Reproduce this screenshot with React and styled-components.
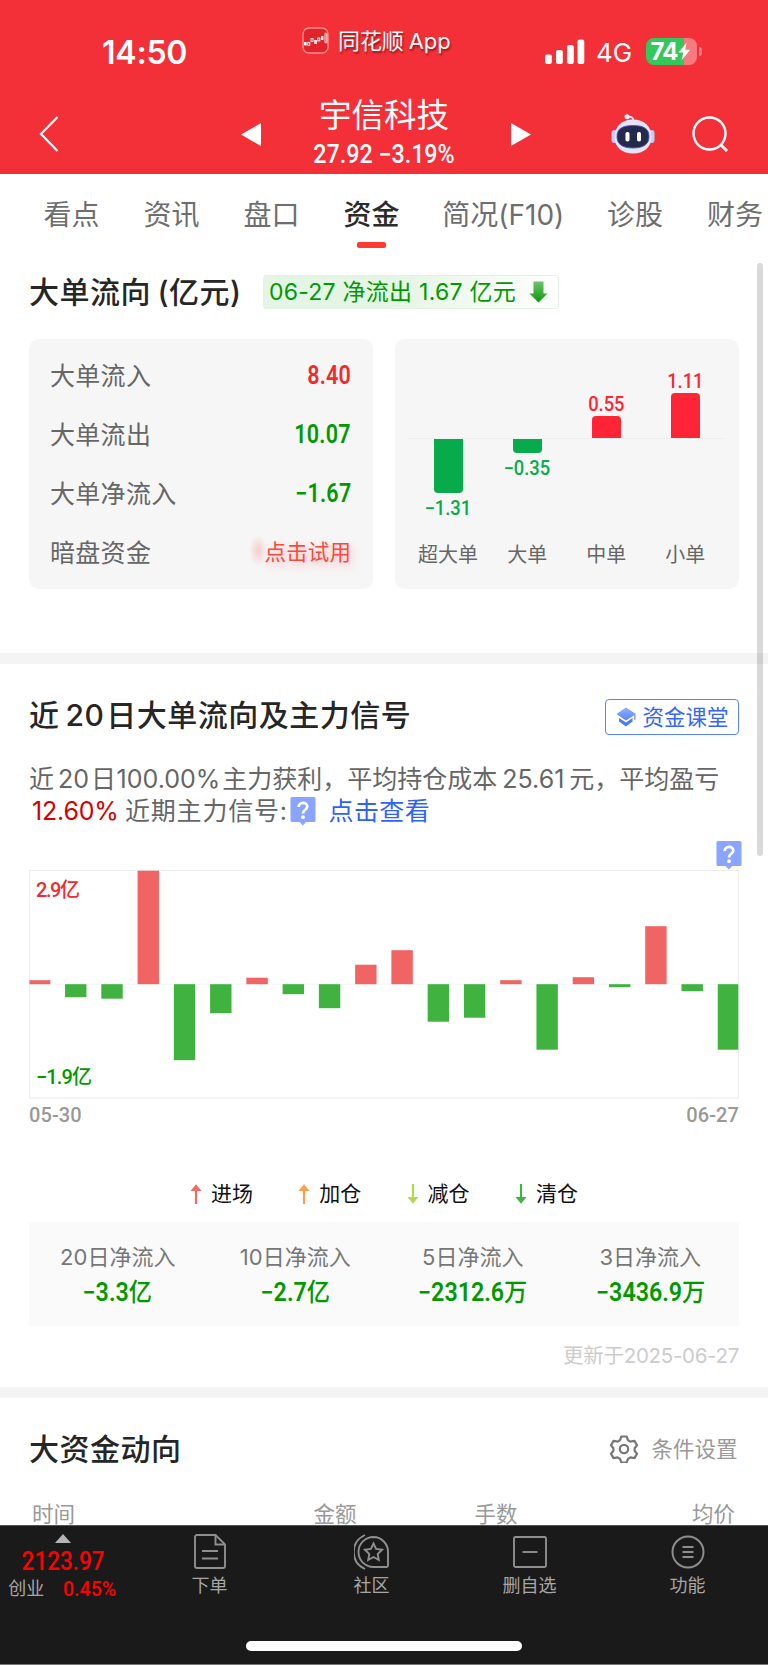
import React from 'react';
import styled, { createGlobalStyle } from 'styled-components';

const flowRows = [
    { label: '大单流入', value: '8.40', color: '#f12b2b' },
    { label: '大单流出', value: '10.07', color: '#009900' },
    { label: '大单净流入', value: '−1.67', color: '#009900' },
];

const orderBars = [
    { label: '超大单', value: '−1.31', height: -54 },
    { label: '大单', value: '−0.35', height: -14 },
    { label: '中单', value: '0.55', height: 22 },
    { label: '小单', value: '1.11', height: 45 },
];

const dailyFlow = [
    4, -13, -14.5, 113.5, -76, -29, 6.5, -10, -24, 19.5, 34, -37.5, -33.5, 4,
    -65.5, 7, -3, 58, -7, -65.5,
];

const legend = [
    { label: '进场', color: '#f26b66', up: true },
    { label: '加仓', color: '#ff9f4a', up: true },
    { label: '减仓', color: '#b2d84f' },
    { label: '清仓', color: '#43b244' },
];

const totals = [
    { label: '20日净流入', value: '−3.3', unit: '亿' },
    { label: '10日净流入', value: '−2.7', unit: '亿' },
    { label: '5日净流入', value: '−2312.6', unit: '万' },
    { label: '3日净流入', value: '−3436.9', unit: '万' },
];

const tabs = ['看点', '资讯', '盘口', '资金', '简况(F10)', '诊股', '财务'];

const AppLogo = () => (
    <svg width="27" height="27" viewBox="0 0 27 27" fill="none">
        <rect x="1" y="1" width="25" height="25" rx="6" fill="#e3232b" stroke="#fa8f90" strokeWidth="1.4" />
        <g fill="#fff">
            <rect x="2" y="15" width="2.6" height="3.4" />
            <rect x="12.3" y="13" width="2.6" height="4" />
            <rect x="19" y="9" width="2.4" height="4" />
        </g>
        <g stroke="#fff" strokeWidth="0.9">
            <rect x="5.8" y="15.4" width="2" height="3" />
            <rect x="9" y="11.6" width="2" height="3" />
            <rect x="15.8" y="11" width="2" height="3" />
            <rect x="23" y="6" width="1.8" height="10" rx="0.9" />
        </g>
    </svg>
);

const Signal = () => (
    <svg width="40" height="26" viewBox="0 0 40 26" fill="#fff">
        <rect x="0" y="15.5" width="6.8" height="9.5" rx="2" />
        <rect x="11" y="11" width="6.8" height="14" rx="2" />
        <rect x="22" y="6" width="6.8" height="19" rx="2" />
        <rect x="32.5" y="0.5" width="6.8" height="24.5" rx="2" />
    </svg>
);

const Bolt = () => (
    <svg width="13" height="19" viewBox="0 0 13 19">
        <path d="M8.6 0.4 0.6 10.6h4.7L3.6 18.6 12.2 7.8H7.2z" fill="#fff" />
    </svg>
);

const Robot = () => (
    <svg width="44" height="40" viewBox="0 0 44 40" fill="none">
        <path d="M16 2.8c4-.6 6.4.4 6.4 4.2" stroke="#e8e4f8" strokeWidth="2" />
        <circle cx="16" cy="2.8" r="2.5" fill="#f3f0ff" />
        <rect x="0.5" y="16" width="6" height="13" rx="3" fill="#c9caf3" />
        <rect x="37.5" y="16" width="6" height="13" rx="3" fill="#c9caf3" />
        <path d="M22 5.5c11 0 18.5 7 18.5 17.5S32.5 39.5 22 39.5 3.5 33.5 3.5 23 11 5.5 22 5.5z" fill="#e4e5f8" />
        <path d="M22 11.5c11 0 16 3.5 16 11s-5 11.500-16 11.500S6 30 6 22.500s5-11 16-11z" fill="#242a4c" stroke="#5550c4" strokeWidth="0.9" />
        <rect x="14.5" y="18" width="4" height="9.5" rx="1.8" fill="#fff" />
        <rect x="26" y="18" width="4" height="9.5" rx="1.8" fill="#fff" />
    </svg>
);

const Search = () => (
    <svg width="36" height="36" viewBox="0 0 36 36" fill="none" stroke="#fff" strokeWidth="2.4">
        <circle cx="17.5" cy="17.5" r="16" />
        <path d="M28.5 28.5 35 35" strokeWidth="2.8" />
    </svg>
);

const DownArrow = () => (
    <svg width="19" height="22" viewBox="0 0 19 22">
        <defs>
            <linearGradient id="down" x1="0" y1="0" x2="0" y2="1">
                <stop offset="0" stopColor="#6cc46c" />
                <stop offset="1" stopColor="#0a9a0a" />
            </linearGradient>
        </defs>
        <path d="M4.5 0.5h10v12h4L9.5 21.500 0.500 12.500h4z" fill="url(#down)" />
    </svg>
);

const Cap = () => (
    <svg width="20" height="20" viewBox="0 0 20 20">
        <defs>
            <linearGradient id="cap" x1="0" y1="0" x2="0" y2="1">
                <stop offset="0" stopColor="#8fb0ff" />
                <stop offset="1" stopColor="#5b84fb" />
            </linearGradient>
        </defs>
        <path d="M10 0.5 19.5 6.800v6h-1.200V8.200L10 13.500 0.500 7z" fill="url(#cap)" />
        <path d="M3 11 10 15.500l6.500-4.500v3.500L10 19.500 3 14.500z" fill="#4f7bfa" />
    </svg>
);

const Help = () => (
    <svg width="26" height="29" viewBox="0 0 26 29">
        <path d="M2 0h22a1.5 1.5 0 0 1 1.5 1.5v22A1.5 1.5 0 0 1 24 25h-8l-3.2 3.4L9.600 25H2A1.500 1.500 0 0 1 .5 23.500v-22A1.500 1.500 0 0 1 2 0z" fill="#8aa5ff" />
        <path d="M8.700 10c0-5.500 8.600-5.500 8.600-.400 0 3.200-4.300 3.200-4.300 6.800" fill="none" stroke="#fff" strokeWidth="2.700" />
        <circle cx="13" cy="20.200" r="1.900" fill="#fff" />
    </svg>
);

const LegendArrow = ({ color, up }) => (
    <svg width="12" height="20" viewBox="0 0 12 20">
        <g transform={up ? undefined : 'rotate(180 6 10)'}>
            <path d="M4.900 5h2.200v15H4.900z" fill={color} />
            <path d="M6 0.300 11.500 7H.5z" fill={color} />
        </g>
    </svg>
);

const Gear = () => (
    <svg width="30" height="28" viewBox="0 0 30 28" fill="none" stroke="#777" strokeWidth="2.2" strokeLinejoin="round">
        <path d="M12.400 1.500h5.200l1.500 3.800 2.300 1.300 4.100-.700 2.500 4.400-2.400 2.900v2.600l2.400 2.900-2.500 4.400-4.100-.700-2.300 1.300-1.500 3.800h-5.200l-1.500-3.800-2.300-1.300-4.100.700L2 18.700l2.400-2.900v-2.600L2 10.300l2.500-4.400 4.100.700 2.300-1.300z" />
        <circle cx="15" cy="14" r="4.2" />
    </svg>
);

const OrderIcon = () => (
    <NavSvg viewBox="0 0 36 36">
        <path d="M5 1h18.500L33 10.500V32a2 2 0 0 1-2 2H5a2 2 0 0 1-2-2V3a2 2 0 0 1 2-2z" />
        <path d="M23.500 1v9.500H33M10 17h16M10 24.500h16" />
    </NavSvg>
);

const CommunityIcon = () => (
    <NavSvg viewBox="0 0 36 36">
        <path d="M19.500 3a14.800 14.800 0 1 0 0 30h13a1.500 1.500 0 0 0 1.500-1.500V18A14.800 14.800 0 0 0 19.500 3z" />
        <path d="M11 1C-4 8-4 28 11 35" />
        <path d="m19.500 9.500 2.600 5.500 6 .8-4.400 4.200 1.100 6-5.300-3-5.300 3 1.100-6-4.400-4.200 6-.8z" />
    </NavSvg>
);

const RemoveIcon = () => (
    <NavSvg viewBox="0 0 36 36">
        <rect x="2" y="3" width="32" height="30" rx="1.5" />
        <path d="M10.500 18h15" />
    </NavSvg>
);

const MenuIcon = () => (
    <NavSvg viewBox="0 0 36 36">
        <circle cx="18" cy="18" r="15.5" />
        <path d="M12.500 13h11M12.500 18h11M12.500 23h11" />
    </NavSvg>
);

const navItems = [
    { label: '下单', Icon: OrderIcon },
    { label: '社区', Icon: CommunityIcon },
    { label: '删自选', Icon: RemoveIcon },
    { label: '功能', Icon: MenuIcon },
];

const Header = () => (
    <HeaderWrapper>
        <StatusBar>
            <Clock>14:50</Clock>
            <AppName>
                <AppLogo />
                <span>同花顺 App</span>
            </AppName>
            <Radio>
                <Signal />
                <Network>4G</Network>
                <Battery>
                    74
                    <Bolt />
                </Battery>
                <BatteryTip />
            </Radio>
        </StatusBar>
        <TitleBar>
            <svg width="20" height="36" viewBox="0 0 20 36" fill="none" stroke="#fff" strokeWidth="2.2">
                <path d="M18.500 1 2 18l16.500 17" />
            </svg>
            <Stock>
                <svg width="20" height="23" viewBox="0 0 20 23">
                    <path d="M20 0v23L0 11.500z" fill="#fff" />
                </svg>
                <StockText>
                    <StockName>宇信科技</StockName>
                    <StockPrice>27.92 −3.19%</StockPrice>
                </StockText>
                <svg width="20" height="23" viewBox="0 0 20 23">
                    <path d="M0 0v23l20-11.500z" fill="#fff" />
                </svg>
            </Stock>
            <Actions>
                <Robot />
                <Search />
            </Actions>
        </TitleBar>
    </HeaderWrapper>
);

const LargeOrders = () => (
    <FlowSection>
        <FlowHeading>
            <Heading $space={-2}>大单流向 (亿元)</Heading>
            <FlowBadge>
                <span>06-27 净流出 1.67 亿元</span>
                <DownArrow />
            </FlowBadge>
        </FlowHeading>
        <Cards>
            <FlowCard>
                {flowRows.map(({ label, value, color }) => (
                    <FlowRow key={label}>
                        <span>{label}</span>
                        <FlowValue $color={color}>{value}</FlowValue>
                    </FlowRow>
                ))}
                <FlowRow>
                    <span>暗盘资金</span>
                    <Trial>点击试用</Trial>
                </FlowRow>
            </FlowCard>
            <OrderCard>
                <OrderPlot>
                    {orderBars.map(({ label, value, height }) => (
                        <OrderColumn key={label}>
                            <PositiveHalf>
                                {height > 0 && (
                                    <>
                                        <OrderValue $up>{value}</OrderValue>
                                        <OrderBar $up style={{ height }} />
                                    </>
                                )}
                            </PositiveHalf>
                            <NegativeHalf>
                                {height < 0 && (
                                    <>
                                        <OrderBar style={{ height: -height }} />
                                        <OrderValue>{value}</OrderValue>
                                    </>
                                )}
                            </NegativeHalf>
                            <OrderLabel>{label}</OrderLabel>
                        </OrderColumn>
                    ))}
                </OrderPlot>
            </OrderCard>
        </Cards>
    </FlowSection>
);

const MainSignal = () => (
    <SignalSection>
        <SectionTop>
            <Heading>
                近<Gap $w={6} />20<Gap $w={2} />日大单流向及主力信号
            </Heading>
            <ClassButton>
                <Cap />
                资金课堂
            </ClassButton>
        </SectionTop>
        <Summary>
            <SummaryLine>
                近<Gap $w={4} />20<Gap $w={2} />日<Gap $w={0.5} />100.00%
                <Gap $w={2} />主力获利，平均持仓成本<Gap $w={5} />25.61<Gap $w={5} />元，平均盈亏
            </SummaryLine>
            <SummaryLine>
                <Profit>12.60%</Profit>
                <Recent>近期主力信号:</Recent>
                <Help />
                <Link>点击查看</Link>
            </SummaryLine>
        </Summary>
        <HelpRow>
            <Help />
        </HelpRow>
        <Chart viewBox="0 0 710 229">
            <rect x="0.5" y="0.5" width="709" height="227.5" fill="none" stroke="#ededed" strokeWidth="1.2" />
            <path d="M0 114.200h710" stroke="#f3f3f3" />
            {dailyFlow.map((v, i) => (
                <rect
                    key={i}
                    x={Math.max(0.5, i * 36.26 - 0.2)}
                    y={v > 0 ? 114.2 - v : 114.2}
                    width={i === 0 ? 20.8 : Math.min(21.4, 709.5 - i * 36.26)}
                    height={Math.abs(v)}
                    fill={v > 0 ? '#f06464' : '#40b240'}
                />
            ))}
            <ChartText x="7" y="26.5" fill="#f12b2b" textLength="44">2.9亿</ChartText>
            <ChartText x="7" y="214" fill="#009900" textLength="56">−1.9亿</ChartText>
        </Chart>
        <Dates>
            <span>05-30</span>
            <span>06-27</span>
        </Dates>
        <Legend>
            {legend.map(({ label, color, up }) => (
                <LegendItem key={label}>
                    <LegendArrow color={color} up={up} />
                    {label}
                </LegendItem>
            ))}
        </Legend>
        <Totals>
            {totals.map(({ label, value, unit }) => (
                <Total key={label}>
                    <span>{label}</span>
                    <TotalValue>
                        <b>{value}</b>
                        {unit}
                    </TotalValue>
                </Total>
            ))}
        </Totals>
        <Updated>更新于2025-06-27</Updated>
    </SignalSection>
);

const FundMoves = () => (
    <MovesSection>
        <SectionTop>
            <Heading>大资金动向</Heading>
            <Settings>
                <Gear />
                条件设置
            </Settings>
        </SectionTop>
        <TableHead>
            <span>时间</span>
            <span>金额</span>
            <span>手数</span>
            <span>均价</span>
        </TableHead>
    </MovesSection>
);

const BottomNav = () => (
    <NavWrapper>
        <NavRow>
            <IndexBox>
                <svg width="16" height="9" viewBox="0 0 16 9">
                    <path d="M8 0l8 9H0z" fill="#b5b5b5" />
                </svg>
                <IndexValue>2123.97</IndexValue>
                <IndexChange>
                    <span>创业</span>
                    <em>0.45%</em>
                </IndexChange>
            </IndexBox>
            {navItems.map(({ label, Icon }) => (
                <NavItem key={label}>
                    <Icon />
                    <span>{label}</span>
                </NavItem>
            ))}
        </NavRow>
        <HomeBar />
    </NavWrapper>
);

const App = () => (
    <Screen>
        <GlobalStyle />
        <Header />
        <Body>
            <Tabs>
                {tabs.map((tab) => (
                    <Tab key={tab} $active={tab === '资金'}>
                        {tab}
                    </Tab>
                ))}
            </Tabs>
            <LargeOrders />
            <Divider />
            <MainSignal />
            <Divider />
            <FundMoves />
            <ScrollThumb />
        </Body>
        <BottomNav />
    </Screen>
);

export default App;

const cjk = `Inter, 'Noto Sans CJK SC', sans-serif`;
const din = `Roboto, 'Noto Sans CJK SC', sans-serif`;

const GlobalStyle = createGlobalStyle`
    * {
        box-sizing: border-box;
    }
    body {
        margin: 0;
        background: #fff;
    }
    svg {
        display: block;
        flex: none;
    }
`;

const Screen = styled.div`
    width: 768px;
    height: 1665px;
    display: flex;
    flex-direction: column;
    overflow: hidden;
    font-family: ${cjk};
    color: #666;
    white-space: nowrap;
`;

const HeaderWrapper = styled.header`
    flex: none;
    height: 174px;
    background: #f33038;
    color: #fff;
`;

const StatusBar = styled.div`
    display: flex;
    height: 84px;
`;

const Clock = styled.div`
    width: 302px;
    padding: 33px 0 0 102px;
    font-size: 32px;
    line-height: 40px;
    font-weight: 600;
    letter-spacing: -0.2px;
`;

const AppName = styled.div`
    display: flex;
    width: 243px;
    padding-top: 27px;
    font-size: 22px;
    line-height: 28px;
    letter-spacing: -0.1px;
    word-spacing: -1px;
    text-shadow: 1px 2px 2px rgba(90, 0, 0, 0.6);
    > svg {
        margin-right: 9px;
    }
`;

const Radio = styled.div`
    display: flex;
    align-items: center;
    height: 27px;
    margin-top: 38px;
`;

const Network = styled.span`
    width: 49.5px;
    margin-left: 11px;
    font-size: 26px;
    line-height: 30px;
    padding-top: 2px;
`;

const Battery = styled.div`
    display: flex;
    align-items: center;
    width: 51px;
    height: 27px;
    padding-left: 5px;
    border-radius: 8px;
    background: linear-gradient(to right, #34c759 38px, #f8797e 38px);
    font-size: 24px;
    font-weight: 700;
    letter-spacing: -0.8px;
`;

const BatteryTip = styled.div`
    width: 3px;
    height: 9px;
    margin-left: 2px;
    border-radius: 0 3px 3px 0;
    background: #f8797e;
`;

const TitleBar = styled.div`
    display: flex;
    align-items: center;
    height: 90px;
    padding: 10px 40px 0 39px;
`;

const Stock = styled.div`
    display: flex;
    align-items: center;
    margin-left: 181.5px;
`;

const StockText = styled.div`
    width: 250px;
    text-align: center;
    margin-top: 1px;
`;

const StockName = styled.div`
    font-size: 32.5px;
    line-height: 40px;
    margin-left: -3px;
`;

const StockPrice = styled.div`
    font-family: ${din};
    font-size: 25px;
    font-weight: 500;
    line-height: 38px;
    transform: scaleX(0.93);
    margin: 0 0 0 -4px;
`;

const Actions = styled.div`
    display: flex;
    align-items: center;
    gap: 37px;
    margin-left: auto;
`;

const Body = styled.main`
    position: relative;
    display: flex;
    flex-direction: column;
    height: 1351px;
    overflow: hidden;
`;

const Tabs = styled.nav`
    display: flex;
    flex: none;
    gap: 44px;
    height: 84px;
    padding: 21px 0 0 43.5px;
`;

const Tab = styled.div`
    display: flex;
    flex: none;
    flex-direction: column;
    align-items: center;
    font-size: 28px;
    line-height: 40px;
    color: ${({ $active }) => ($active ? '#2b2b2b' : '#6e6e6e')};
    font-weight: ${({ $active }) => ($active ? 500 : 400)};
    &::after {
        content: '';
        display: ${({ $active }) => ($active ? 'block' : 'none')};
        width: 29px;
        height: 6px;
        margin-top: 7px;
        border-radius: 2px;
        background: #ff3b32;
    }
    &:nth-child(5) {
        width: 119.5px;
    }
`;

const Heading = styled.h2`
    display: flex;
    white-space: pre;
    margin: 0;
    font-size: 30px;
    line-height: 40px;
    font-weight: 500;
    color: #262626;
    letter-spacing: 0.5px;
    word-spacing: ${({ $space = 0 }) => $space}px;
`;

const FlowSection = styled.section`
    flex: none;
    height: 395px;
    padding: 14px 29px 0;
`;

const FlowHeading = styled.div`
    display: flex;
    align-items: center;
    height: 40px;
`;

const FlowBadge = styled.div`
    display: flex;
    align-items: center;
    gap: 13px;
    width: 296px;
    height: 34px;
    margin-left: auto;
    margin-right: 180px;
    padding-left: 5px;
    border: 1px solid #e3f4e3;
    border-radius: 3px;
    background: linear-gradient(100deg, #e5f5e5 45%, #fff 100%);
    color: #009900;
    font-size: 23px;
    line-height: 30px;
    letter-spacing: 0.25px;
`;

const Cards = styled.div`
    display: flex;
    gap: 22px;
    margin-top: 27px;
`;

const Card = styled.div`
    width: 344px;
    height: 250px;
    border-radius: 10px;
    background: #f6f6f6;
`;

const FlowCard = styled(Card)`
    display: flex;
    flex-direction: column;
    padding: 5px 22px 0 21px;
`;

const FlowRow = styled.div`
    display: flex;
    align-items: center;
    justify-content: space-between;
    height: 59px;
    font-size: 25px;
    letter-spacing: 0.3px;
`;

const FlowValue = styled.span`
    padding-top: 3px;
    font-family: ${din};
    font-size: 25px;
    font-weight: 600;
    color: ${({ $color }) => $color};
    transform: scaleX(0.86);
    transform-origin: right;
`;

const Trial = styled.span`
    padding-left: 15px;
    background: radial-gradient(ellipse 9px 16px at 8px 50%, rgba(255, 80, 70, 0.25), transparent);
    color: #fb4840;
    font-size: 21.5px;
    text-shadow: 2px 4px 10px rgba(255, 80, 70, 0.4);
    letter-spacing: 0.1px;
`;

const OrderCard = styled(Card)`
    padding: 0 21px;
`;

const OrderPlot = styled.div`
    display: flex;
    margin: 0 -7.5px;
`;

const OrderColumn = styled.div`
    display: flex;
    flex: none;
    flex-direction: column;
    width: 79.1px;
`;

const PositiveHalf = styled.div`
    display: flex;
    flex-direction: column;
    align-items: center;
    justify-content: flex-end;
    height: 99.5px;
    border-bottom: 1px solid #eee;
`;

const NegativeHalf = styled.div`
    display: flex;
    flex-direction: column;
    align-items: center;
    height: 103px;
`;

const OrderBar = styled.div`
    width: 29px;
    flex: none;
    border-radius: ${({ $up }) => ($up ? '4px 4px 0 0' : '0 0 4px 4px')};
    background: ${({ $up }) => ($up ? '#ff2436' : '#07ab4b')};
`;

const OrderValue = styled.span`
    padding: ${({ $up }) => ($up ? 0 : '4.5px 0 0')};
    font-family: ${din};
    font-size: 19.5px;
    font-weight: 500;
    line-height: 23px;
    color: ${({ $up }) => ($up ? '#ff2436' : '#07ab4b')};
    transform: scaleX(0.94);
`;

const OrderLabel = styled.span`
    font-size: 20px;
    line-height: 26px;
    text-align: center;
`;

const Divider = styled.div`
    flex: none;
    height: 11px;
    background: #f4f4f4;
`;

const SignalSection = styled.section`
    flex: none;
    display: flex;
    flex-direction: column;
    height: 723px;
    padding: 30.5px 29px 0;
`;

const SectionTop = styled.div`
    display: flex;
    align-items: center;
    justify-content: space-between;
    height: 40px;
`;

const ClassButton = styled.div`
    display: flex;
    align-items: center;
    gap: 6.5px;
    width: 134px;
    height: 36px;
    margin-top: 5px;
    padding-left: 10px;
    border: 1.5px solid #5a82fa;
    border-radius: 4px;
    color: #3566f8;
    font-size: 21.5px;
    line-height: 30px;
`;

const Summary = styled.div`
    margin-top: 28.5px;
    font-size: 25px;
`;

const SummaryLine = styled.div`
    display: flex;
    align-items: center;
    height: 32px;
    line-height: 32px;
`;

const Gap = styled.i`
    width: ${({ $w }) => $w}px;
`;

const Profit = styled.span`
    width: 96px;
    padding-left: 3px;
    letter-spacing: -0.2px;
    color: #d40000;
`;

const Recent = styled.span`
    width: 164.5px;
    letter-spacing: 0.8px;
`;

const Link = styled.span`
    margin-left: 13px;
    letter-spacing: 0.4px;
    color: #2f62fa;
`;

const HelpRow = styled.div`
    display: flex;
    justify-content: flex-end;
    height: 29px;
    margin: 14px -2.5px 0 0;
`;

const Chart = styled.svg`
    width: 710px;
    height: 229px;
`;

const ChartText = styled.text`
    font-family: ${din};
    font-size: 20px;
    font-weight: 500;
`;

const Dates = styled.div`
    display: flex;
    justify-content: space-between;
    margin-top: 3px;
    font-family: ${din};
    font-size: 20px;
    font-weight: 500;
    line-height: 26px;
    letter-spacing: 0.1px;
    color: #999;
`;

const Legend = styled.div`
    display: flex;
    gap: 42px;
    height: 30px;
    margin: 51px 0 13px 161px;
`;

const LegendItem = styled.div`
    display: flex;
    align-items: center;
    gap: 9px;
    width: 66.3px;
    font-size: 21px;
    line-height: 30px;
    color: #111;
`;

const Totals = styled.div`
    display: grid;
    grid-template-columns: repeat(4, 1fr);
    flex: none;
    height: 104px;
    padding-top: 18.5px;
    background: #fafafa;
`;

const Total = styled.div`
    display: flex;
    flex-direction: column;
    align-items: center;
    font-size: 22px;
    line-height: 32px;
    color: #777;
`;

const TotalValue = styled.span`
    margin-top: 2.5px;
    font-family: ${din};
    font-size: 25px;
    font-weight: 500;
    line-height: 36px;
    color: #009900;
    transform: scaleX(0.93);
    b {
        font-weight: 600;
    }
`;

const Updated = styled.div`
    margin-top: 14px;
    text-align: right;
    font-size: 20.5px;
    line-height: 32px;
    letter-spacing: -0.3px;
    color: #ccc;
`;

const MovesSection = styled.section`
    flex: none;
    padding: 30.5px 29px 0;
`;

const Settings = styled.div`
    display: flex;
    align-items: center;
    gap: 12px;
    margin-right: 1.5px;
    font-size: 21.5px;
    line-height: 30px;
    color: #999;
`;

const TableHead = styled.div`
    display: grid;
    grid-template-columns: 281.5px 161px 1fr auto;
    margin-top: 34px;
    padding: 0 4px 0 3px;
    font-size: 21.5px;
    line-height: 22px;
    color: #999;
`;

const ScrollThumb = styled.div`
    position: absolute;
    top: 89px;
    right: 5px;
    width: 6px;
    height: 593px;
    border-radius: 3px;
    background: rgba(0, 0, 0, 0.15);
`;

const NavWrapper = styled.footer`
    display: flex;
    flex-direction: column;
    align-items: center;
    height: 140px;
    border-top: 1px solid #555;
    border-bottom: 1px solid #777;
    background: #1a1a1a;
    color: #a6a6a6;
`;

const NavRow = styled.div`
    display: grid;
    grid-template-columns: 130px 159px 165px 151px 165px;
    width: 768px;
    height: 115px;
`;

const IndexBox = styled.div`
    display: flex;
    flex-direction: column;
    align-items: center;
    padding: 8px 3.5px 0 0;
    font-size: 18px;
`;

const IndexValue = styled.div`
    margin-top: 3px;
    font-family: ${din};
    font-size: 25px;
    font-weight: 500;
    line-height: 31px;
    color: #f00;
    transform: scaleX(0.9);
`;

const IndexChange = styled.div`
    display: flex;
    gap: 17px;
    line-height: 24px;
    em {
        font-family: ${din};
        font-size: 21px;
        font-style: normal;
        font-weight: 500;
        color: #f00;
        transform: scaleX(0.93);
    }
`;

const NavItem = styled.div`
    display: flex;
    flex-direction: column;
    align-items: center;
    padding-top: 8px;
    font-size: 18px;
    line-height: 31px;
`;

const NavSvg = styled.svg`
    width: 36px;
    height: 36px;
    fill: none;
    stroke: #8f8f8f;
    stroke-width: 1.9px;
`;

const HomeBar = styled.div`
    width: 276px;
    height: 10px;
    border-radius: 5px;
    background: #fff;
`;
